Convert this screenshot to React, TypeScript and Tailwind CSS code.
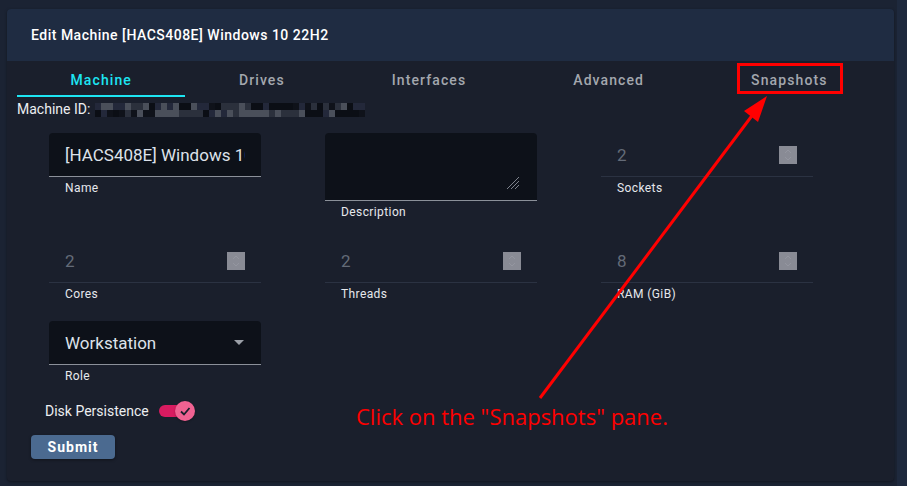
import React from "react";

const palette = ["#0b0e15", "#1a1f2b", "#2b303c", "#3a3f4a", "#4a4f5a", "#141822", "#23283a", "#2f3450", "#0f121a", "#555a66"];
function mosaic() {
  let s = 17;
  const cells: { x: number; y: number; c: string }[] = [];
  for (let r = 0; r < 2; r++) {
    for (let i = 0; i < 45; i++) {
      s = (s * 1103515245 + 12345) % 2147483648;
      cells.push({ x: i * 6, y: r * 7, c: palette[s % palette.length] });
    }
  }
  return cells;
}
const cells = mosaic();

const Helper = ({ children }: { children: React.ReactNode }) => (
  <div className="mt-[3px] pt-[1px] ml-4 text-[12px] leading-[15px] tracking-[0.4px] text-[#e6e8ec]">{children}</div>
);

const Spinner = () => (
  <div className="w-[18px] h-[18px] bg-[#898b95] flex items-center justify-center">
    <svg width="10" height="14" viewBox="0 0 10 14">
      <path d="M2 5 L5 2 L8 5" stroke="#9496a0" strokeWidth="1" fill="none" />
      <path d="M2 9 L5 12 L8 9" stroke="#9496a0" strokeWidth="1" fill="none" />
    </svg>
  </div>
);

const NumField = ({ value, label }: { value: string; label: string }) => (
  <div>
    <div className="h-[44px] border-b border-[#2b3242] pl-4 pr-4 flex items-center justify-between">
      <span className="text-[17px] text-[#646b78] pt-[2px]">{value}</span>
      <Spinner />
    </div>
    <Helper>{label}</Helper>
  </div>
);

export default function App() {
  const tabs = ["Machine", "Drives", "Interfaces", "Advanced", "Snapshots"];
  return (
    <div className="relative w-[907px] h-[486px] bg-[#1b2333] overflow-hidden" style={{ fontFamily: "Roboto, 'Liberation Sans', sans-serif" }}>
      <div className="absolute right-0 top-0 w-[10px] h-full bg-[#1e293d]" />
      <div className="relative ml-[7px] mt-[9px] w-[887px] h-[472px] bg-[#1a1f2c] rounded-[4px] shadow-[0_1px_3px_rgba(0,0,0,0.4)] flex flex-col">
        <div className="h-[52px] bg-[#1f2c42] rounded-t-[4px] flex items-center pl-6">
          <span className="text-[14px] font-medium text-white tracking-[0.5px]">Edit Machine [HACS408E] Windows 10 22H2</span>
        </div>
        <div className="px-[10px]">
          <div className="flex w-[864px] h-[36px]">
            {tabs.map((t, i) => (
              <div key={t} className={`flex-auto flex items-center justify-center text-[14px] font-medium tracking-[1.1px] ${i === 0 ? "text-[#1de5f2] border-b-2 border-[#1de5f2]" : "text-[#a3a7ae] border-b-2 border-transparent"}`}>
                <span className="pt-[4px]">{t}</span>
              </div>
            ))}
          </div>
          <div className="flex items-center h-[20px] mt-[2px]">
            <span className="text-[14px] text-[#eceef1]">Machine ID:</span>
            <svg width="272" height="14" className="ml-[5px] mt-[1px]">
              {cells.map((c, i) => (
                <rect key={i} x={c.x} y={c.y} width="6" height="7" fill={c.c} />
              ))}
            </svg>
          </div>
          <div className="grid grid-cols-[212px_212px_212px] gap-x-16 gap-y-[19px] pl-8 mt-[14px]">
            <div>
              <div className="h-[44px] bg-[#0d1119] rounded-t-[4px] border-b border-[#8b9099] pl-4 pr-4 flex items-center overflow-hidden">
                <span className="text-[17px] text-[#dde2ea] whitespace-nowrap overflow-hidden pt-[2px]">[HACS408E] Windows 10 22H2</span>
              </div>
              <Helper>Name</Helper>
            </div>
            <div>
              <div className="relative h-[68px] bg-[#0d1119] rounded-t-[4px] border-b border-[#8b9099]">
                <svg width="14" height="14" viewBox="0 0 14 14" className="absolute right-[17px] bottom-[10px]">
                  <path d="M1 13 L13 1 M5 13 L13 5 M9 13 L13 9" stroke="#7d828c" strokeWidth="1" />
                </svg>
              </div>
              <Helper>Description</Helper>
            </div>
            <NumField value="2" label="Sockets" />
            <NumField value="2" label="Cores" />
            <NumField value="2" label="Threads" />
            <NumField value="8" label="RAM (GiB)" />
            <div>
              <div className="h-[44px] bg-[#0d1119] rounded-t-[4px] border-b border-[#8b9099] pl-4 pr-[17px] flex items-center justify-between">
                <span className="text-[17px] text-[#dde2ea] pt-[2px]">Workstation</span>
                <svg width="10" height="5" viewBox="0 0 10 5">
                  <path d="M0 0 L10 0 L5 5 Z" fill="#9ba0a8" />
                </svg>
              </div>
              <Helper>Role</Helper>
            </div>
          </div>
          <div className="flex items-center h-[24px] mt-[15px] pl-[28px]">
            <span className="text-[14px] text-[#eceef1]">Disk Persistence</span>
            <div className="relative ml-[10px] w-[36px] h-[20px] flex items-center">
              <div className="w-[34px] h-[12px] rounded-full bg-[#d81b60]" />
              <div className="absolute left-[16px] top-0 w-[20px] h-[20px] rounded-full bg-[#f06292] flex items-center justify-center shadow-[0_1px_2px_rgba(0,0,0,0.3)]">
                <svg width="12" height="12" viewBox="0 0 12 12">
                  <path d="M2 6.5 L5 9.5 L10.5 3" stroke="#1b1f2c" strokeWidth="1.8" fill="none" />
                </svg>
              </div>
            </div>
          </div>
          <div className="pl-[14px] mt-[12px]">
            <button className="w-[84px] h-[24px] rounded-[4px] bg-[#4b6a90] text-white text-[14px] font-bold tracking-[1px] shadow-[0_1px_3px_rgba(0,0,0,0.4)] flex items-center justify-center">
              Submit
            </button>
          </div>
        </div>
      </div>

      <div className="absolute left-[737px] top-[63px] w-[106px] h-[31px] border-[3px] border-[#ff0000]" />
      <svg className="absolute left-0 top-0 pointer-events-none" width="907" height="486">
        <line x1="540" y1="398" x2="754" y2="113" stroke="#ff0000" strokeWidth="3" />
        <path d="M767 96 L758 122 L744 111 Z" fill="#ff0000" />
      </svg>
      <div className="absolute left-[356px] top-[401px] text-[22px] leading-[30px] text-[#ff0000] whitespace-nowrap" style={{ fontFamily: "'Open Sans', 'Noto Sans', sans-serif" }}>
        Click on the "Snapshots" pane.
      </div>
    </div>
  );
}
